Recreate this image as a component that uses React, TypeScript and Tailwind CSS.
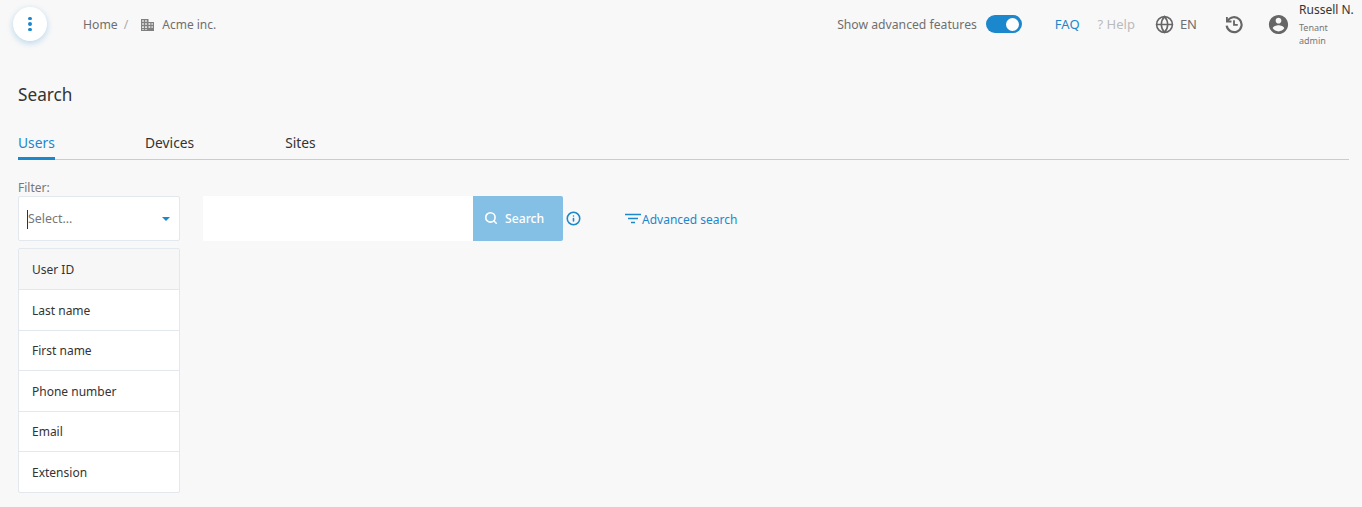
import React from 'react';
import { Search, Info, Globe } from 'lucide-react';

const filters = ['User ID', 'Last name', 'First name', 'Phone number', 'Email', 'Extension'];

const App: React.FC = () => {
  return (
    <div className="h-[507px] overflow-hidden bg-[#f8f8f8] font-['Noto_Sans',sans-serif] text-[13px] text-[#333]">
      {/* Top bar */}
      <header className="flex h-[48px] items-center pl-[13px] pr-[8px]">
        <button className="flex h-[34px] w-[34px] flex-col items-center justify-center gap-[2px] rounded-full bg-white shadow-[0_2px_6px_rgba(30,136,205,0.3)]">
          <span className="h-[3.5px] w-[3.5px] rounded-full bg-[#1b87cc]" />
          <span className="h-[3.5px] w-[3.5px] rounded-full bg-[#1b87cc]" />
          <span className="h-[3.5px] w-[3.5px] rounded-full bg-[#1b87cc]" />
        </button>
        <nav className="ml-[36px] mt-[2px] flex items-center text-[12.2px] text-[#6f6f6f]">
          <span>Home</span>
          <span className="ml-[6px] text-[#aaa]">/</span>
          <svg className="ml-[13px] text-[#808080]" width="13" height="12" viewBox="0 0 13 12" fill="currentColor">
            <path d="M0 0h7.5v3H13v9H0zM1.2 1.2v1.6h1.6V1.2zm3 0v1.6h1.6V1.2zm-3 3v1.6h1.6V4.2zm3 0v1.6h1.6V4.2zm3.3.1v1.5h1.8V4.3zm3 0v1.5h1.3V4.3zm-9.3 3v1.6h1.6V7.3zm3 0v1.6h1.6V7.3zm3.3 0v1.5h1.8V7.3zm3 0v1.5h1.3V7.3zm-9.3 2.9v.8h1.6v-.8zm3 0v.8h1.6v-.8z" fillRule="evenodd" />
          </svg>
          <span className="ml-[8px] text-[12px]">Acme inc.</span>
        </nav>
        <div className="ml-auto flex items-center">
          <span className="mt-[2px] text-[12.2px] text-[#6f6f6f]">Show advanced features</span>
          <div className="ml-[9px] flex h-[18px] w-[36px] items-center justify-end rounded-full bg-[#1b87cc] pr-[3px]">
            <span className="h-[13px] w-[13px] rounded-full bg-white" />
          </div>
          <a className="ml-[33px] mt-[2px] text-[#1b87cc]">FAQ</a>
          <span className="ml-[18px] mt-[2px] text-[#bbb]">? Help</span>
          <Globe className="ml-[20px] h-[19px] w-[19px] text-[#666]" strokeWidth={2} />
          <span className="ml-[6px] mt-[2px] text-[#6f6f6f]">EN</span>
          <svg className="ml-[27px] text-[#666]" width="20" height="20" viewBox="0 0 24 24" fill="none" stroke="currentColor" strokeWidth="2.6">
            <path d="M4.2 8.5A9 9 0 1 1 3.2 14" />
            <path d="M3.5 3.5v5.5H9" strokeWidth="2.2" />
            <path d="M12 7.5V13h4.5" strokeWidth="2.2" />
          </svg>
          <svg className="ml-[23px] text-[#666]" width="23" height="23" viewBox="0 0 24 24" fill="currentColor">
            <path d="M12 2C6.48 2 2 6.48 2 12s4.48 10 10 10 10-4.48 10-10S17.52 2 12 2zm0 3c1.66 0 3 1.34 3 3s-1.34 3-3 3-3-1.34-3-3 1.34-3 3-3zm0 14.2c-2.5 0-4.71-1.28-6-3.22.03-1.99 4-3.08 6-3.08 1.99 0 5.97 1.09 6 3.08-1.29 1.94-3.5 3.22-6 3.22z" />
          </svg>
          <div className="ml-[9px] flex w-[55px] flex-col">
            <span className="text-[12px] leading-[16px] text-[#333]">Russell N.</span>
            <span className="mt-[3px] text-[9px] leading-[13px] text-[#777]">Tenant admin</span>
          </div>
        </div>
      </header>

      <main className="pl-[18px] pr-[13px]">
        <h1 className="mt-[34px] text-[17.2px] leading-[25px] text-[#333]">Search</h1>

        {/* Tabs */}
        <div className="mt-[26px] flex border-b border-[#ccc] text-[13.8px]">
          <div className="-mb-px w-[37px] border-b-[3px] border-[#1b87cc] pb-[3px] text-[#1b87cc]">Users</div>
          <div className="ml-[90px] text-[#333]">Devices</div>
          <div className="ml-[91px] text-[#333]">Sites</div>
        </div>

        <div className="mt-[20px] flex items-start">
          <div className="w-[162px]">
            <div className="text-[12px] leading-[16px] text-[#777]">Filter:</div>
            <div className="flex h-[45px] items-center justify-between rounded-[2px] border border-[#e3e8ee] bg-white pl-[8px] pr-[9px] text-[#777]">
              <span className="mt-[3px] border-l border-[#333] text-[12.4px]">Select...</span>
              <span className="mt-[2px] h-0 w-0 border-x-[4px] border-t-[4px] border-x-transparent border-t-[#1b87cc]" />
            </div>
            <ul className="mt-[7px] rounded-[2px] border border-[#e3e8ee] bg-white text-[12px]">
              {filters.map((f, i) => (
                <li
                  key={f}
                  className={`flex h-[40.5px] items-center pl-[13px] pt-[2px] ${i > 0 ? 'border-t border-[#e3e8ee]' : 'bg-[#f7f7f7]'}`}
                >
                  {f}
                </li>
              ))}
            </ul>
          </div>

          <div className="ml-[23px] mt-[16px] flex items-center">
            <div className="h-[45px] w-[270px] bg-white" />
            <button className="flex h-[45px] w-[90px] items-center justify-start gap-[8px] rounded-r-[2px] bg-[#84bfe5] pl-[11px] text-[12.2px] font-medium text-white">
              <Search className="h-[14px] w-[14px]" strokeWidth={2.8} />
              <span className="-ml-[1px] mt-[2px]">Search</span>
            </button>
            <Info className="ml-[3px] h-[15px] w-[15px] text-[#1b87cc]" strokeWidth={2.5} />
            <a className="ml-[44px] mt-[2px] flex items-center text-[12px] text-[#1b87cc]">
              <svg width="16" height="12" viewBox="0 0 16 12" fill="none" stroke="currentColor" strokeWidth="1.4">
                <path d="M0 1.5h16M3 5.5h10M6 9.5h4" />
              </svg>
              <span className="ml-[1px] mt-[1px]">Advanced search</span>
            </a>
          </div>
        </div>
      </main>
    </div>
  );
};

export default App;
